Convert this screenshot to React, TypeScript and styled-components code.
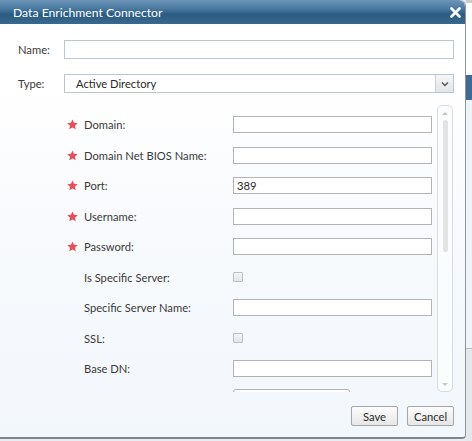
import React from "react";
import styled, { createGlobalStyle } from "styled-components";

const Global = createGlobalStyle`
  html, body { margin: 0; padding: 0; }
  body {
    width: 472px; height: 441px; overflow: hidden;
    background: #e9edf1;
    font-family: "Segoe UI", "Lato", "Noto Sans", sans-serif;
  }
`;

const Page = styled.div`
  display: flex;
  width: 472px;
  height: 441px;
`;

const Dialog = styled.div`
  width: 466px;
  height: 439px;
  box-sizing: border-box;
  border-right: 1px solid #8e979f;
  border-bottom: 2px solid #7f878e;
  border-radius: 0 6px 4px 0;
  background: linear-gradient(#ffffff 0%, #ffffff 18%, #f8fafd 50%, #f2f7fb 100%);
  display: flex;
  flex-direction: column;
  overflow: hidden;
`;

const TitleBar = styled.div`
  height: 24px;
  flex: none;
  display: flex;
  align-items: center;
  justify-content: space-between;
  padding: 0 3px 0 13px;
  border-radius: 0 6px 0 0;
  background: linear-gradient(#6d95b8 0%, #4a7aa2 35%, #2c5b82 60%, #3a6990 100%);
  color: #fff;
  font-size: 12.2px;
`;

const Close = styled.span`
  display: flex;
  align-items: center;
  padding-top: 1px;
`;

const TopForm = styled.div`
  display: flex;
  flex-direction: column;
  gap: 15px;
  padding: 16px 11px 0 18px;
`;

const TopRow = styled.div`
  display: flex;
  align-items: center;
`;

const TopLabel = styled.label`
  width: 46px;
  font-size: 11.2px;
  color: #3a3a3a;
`;

const WideInput = styled.div`
  flex: 1;
  height: 19px;
  box-sizing: border-box;
  border: 1px solid #b9c7d4;
  background: #fff;
  display: flex;
  align-items: center;
  font-size: 11.2px;
  color: #2a2a2a;
`;

const SelectText = styled.span`
  flex: 1;
  padding-left: 11px;
`;

const DropButton = styled.span`
  width: 17px;
  height: 17px;
  border-left: 1px solid #c9d1d8;
  background: linear-gradient(#f6f6f6, #e2e4e6);
  display: flex;
  align-items: center;
  justify-content: center;
`;

const ScrollArea = styled.div`
  margin: 12px 12px 0 0;
  height: 287px;
  display: flex;
  flex: none;
`;

const ScrollContent = styled.div`
  flex: 1;
  overflow: hidden;
  padding-top: 11px;
  display: grid;
  grid-template-columns: 16px 150px 199px;
  grid-auto-rows: 17px;
  row-gap: 13.5px;
  padding-left: 67px;
  align-items: center;
  align-content: start;
`;

const Star = styled.span`
  display: flex;
  align-items: center;
`;

const FieldLabel = styled.label`
  font-size: 11.2px;
  color: #3a3a3a;
  white-space: nowrap;
  padding-left: 1px;
`;

const FieldInput = styled.div<{ $w?: number; $round?: boolean }>`
  width: ${(p) => p.$w ?? 199}px;
  height: 17px;
  box-sizing: border-box;
  border: 1px solid #b3b3b3;
  border-radius: ${(p) => (p.$round ? "3px 3px 0 0" : "0")};
  background: #fff;
  font-size: 11.2px;
  color: #2a2a2a;
  padding-left: 3px;
  display: flex;
  align-items: center;
  margin-top: ${(p) => (p.$round ? "-4px" : "0")};
`;

const Check = styled.span`
  width: 10px;
  height: 10px;
  box-sizing: border-box;
  border: 1px solid #b9c1c9;
  border-radius: 1px;
  background: linear-gradient(#f4f6f8, #dfe5ea);
`;

const ScrollBar = styled.div`
  width: 16px;
  box-sizing: border-box;
  border: 1px solid #d8dcdf;
  border-radius: 5px;
  background: #fbfcfd;
  display: flex;
  flex-direction: column;
  align-items: center;
  padding: 5px 0 4px;
`;

const Thumb = styled.div`
  width: 5px;
  height: 132px;
  margin-top: 5px;
  border-radius: 3px;
  background: #e1e3e5;
`;

const Spacer = styled.div`
  flex: 1;
`;

const Footer = styled.div`
  display: flex;
  justify-content: flex-end;
  gap: 9px;
  padding: 14px 11px 0 0;
`;

const Button = styled.button<{ $w: number }>`
  width: ${(p) => p.$w}px;
  height: 20px;
  box-sizing: border-box;
  border: 1px solid #a6a6a6;
  border-radius: 2px;
  background: linear-gradient(#fdfdfd, #e6e6e6);
  font-family: inherit;
  font-size: 11.2px;
  color: #2a2a2a;
  padding: 0;
`;

const Behind = styled.div`
  width: 6px;
  display: flex;
  flex-direction: column;
`;

const Strip = styled.div<{ $h: number; $c: string }>`
  height: ${(p) => p.$h}px;
  background: ${(p) => p.$c};
  flex: none;
`;

const StarIcon = () => (
  <svg width="11" height="11" viewBox="0 0 24 24">
    <path
      d="M12 1l3.3 7.4 8.2.8-6.2 5.4 1.9 8L12 18.4l-7.2 4.2 1.9-8L.5 9.2l8.2-.8z"
      fill="#e6505a"
    />
  </svg>
);

const CloseIcon = () => (
  <svg width="14" height="11" viewBox="0 0 14 11">
    <path d="M3.5 1.5l8 8M11.5 1.5l-8 8" stroke="#fff" strokeWidth="2.6" strokeLinecap="round" />
  </svg>
);

const Chevron = () => (
  <svg width="8" height="6" viewBox="0 0 8 6">
    <path d="M1 1.5l3 3 3-3" stroke="#555" strokeWidth="1.4" fill="none" />
  </svg>
);

const Arrow = ({ up }: { up?: boolean }) => (
  <svg width="6" height="4" viewBox="0 0 6 4">
    <path d={up ? "M0 4L3 1 6 4z" : "M0 0L3 3 6 0z"} fill="#c4c8cc" />
  </svg>
);

type Field = { label: string; req?: boolean; kind: "text" | "check"; value?: string };

const fields: Field[] = [
  { label: "Domain:", req: true, kind: "text" },
  { label: "Domain Net BIOS Name:", req: true, kind: "text" },
  { label: "Port:", req: true, kind: "text", value: "389" },
  { label: "Username:", req: true, kind: "text" },
  { label: "Password:", req: true, kind: "text" },
  { label: "Is Specific Server:", kind: "check" },
  { label: "Specific Server Name:", kind: "text" },
  { label: "SSL:", kind: "check" },
  { label: "Base DN:", kind: "text" },
];

export default function App() {
  return (
    <Page>
      <Global />
      <Dialog>
        <TitleBar>
          <span>Data Enrichment Connector</span>
          <Close>
            <CloseIcon />
          </Close>
        </TitleBar>
        <TopForm>
          <TopRow>
            <TopLabel>Name:</TopLabel>
            <WideInput />
          </TopRow>
          <TopRow>
            <TopLabel>Type:</TopLabel>
            <WideInput>
              <SelectText>Active Directory</SelectText>
              <DropButton>
                <Chevron />
              </DropButton>
            </WideInput>
          </TopRow>
        </TopForm>
        <ScrollArea>
          <ScrollContent>
            {fields.map((f) => (
              <React.Fragment key={f.label}>
                <Star>{f.req ? <StarIcon /> : null}</Star>
                <FieldLabel>{f.label}</FieldLabel>
                {f.kind === "check" ? <Check /> : <FieldInput>{f.value}</FieldInput>}
              </React.Fragment>
            ))}
            <span />
            <span />
            <FieldInput $w={117} $round />
          </ScrollContent>
          <ScrollBar>
            <Arrow up />
            <Thumb />
            <Spacer />
            <Arrow />
          </ScrollBar>
        </ScrollArea>
        <Footer>
          <Button $w={47}>Save</Button>
          <Button $w={47}>Cancel</Button>
        </Footer>
      </Dialog>
      <Behind>
        <Strip $h={3} $c="#c9cdd1" />
        <Strip $h={72} $c="#ffffff" />
        <Strip $h={25} $c="#3f6b93" />
        <Strip $h={248} $c="#eef4fa" />
        <Strip $h={1} $c="#b9bec3" />
        <Strip $h={92} $c="#e6e9ec" />
      </Behind>
    </Page>
  );
}
